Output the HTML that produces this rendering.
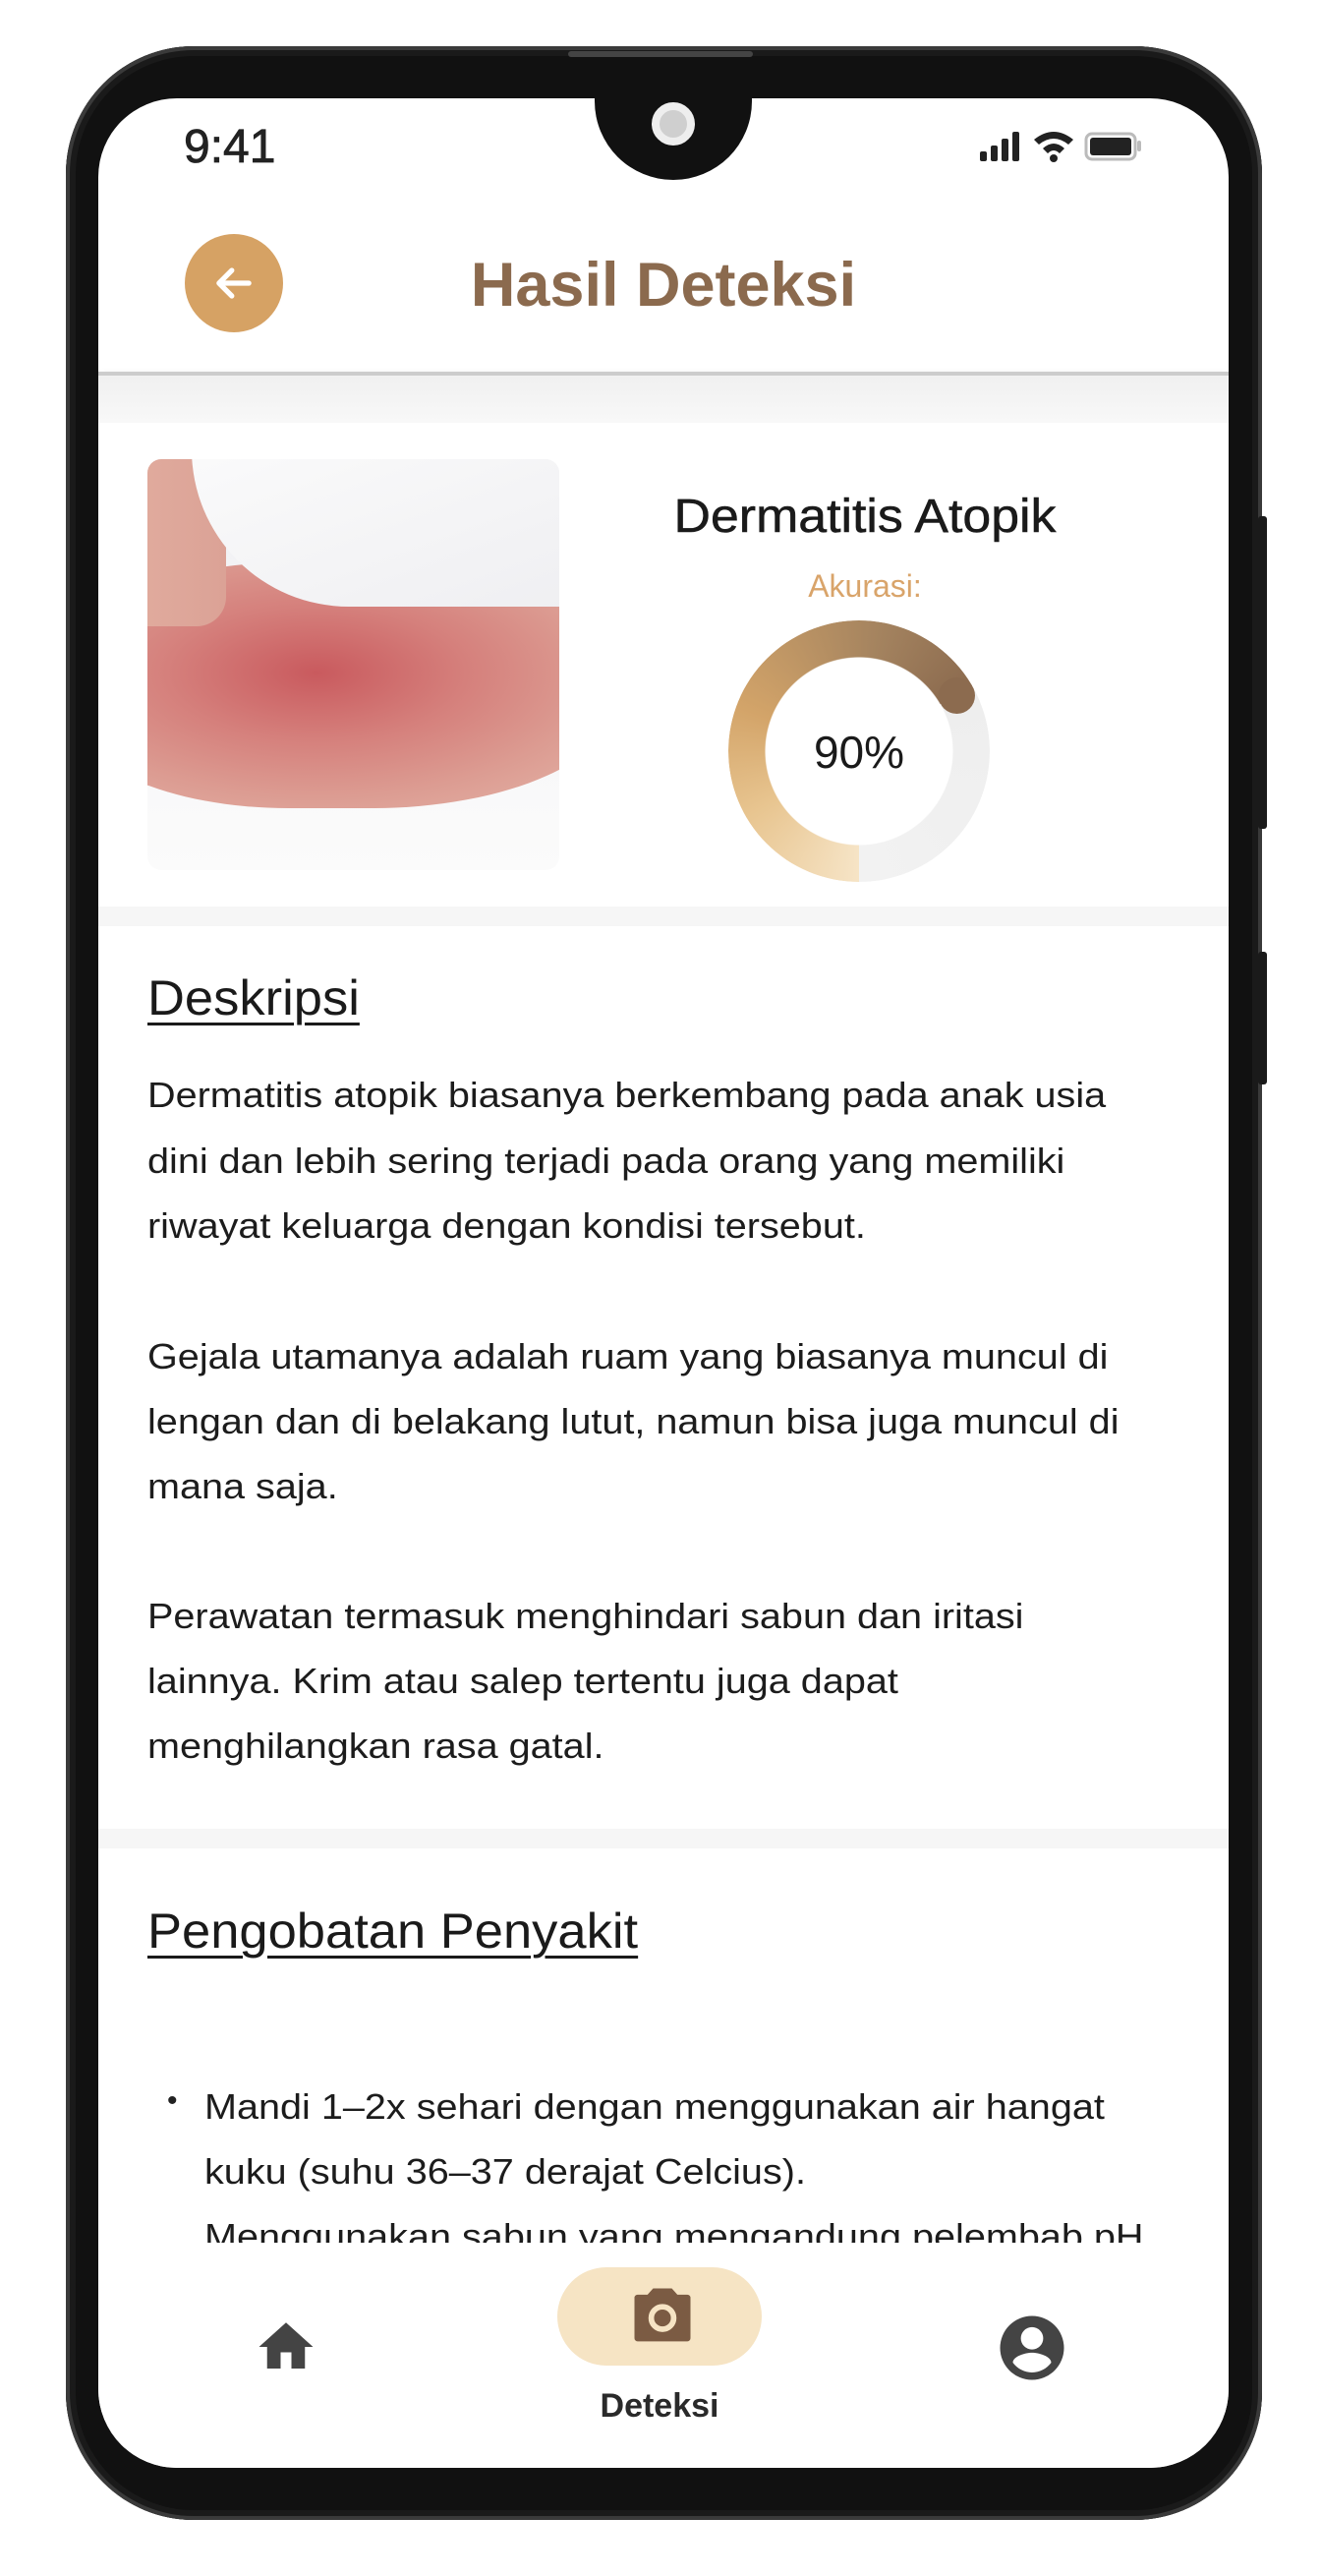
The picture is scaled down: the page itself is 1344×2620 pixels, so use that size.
<!DOCTYPE html>
<html><head><meta charset="utf-8">
<style>
*{margin:0;padding:0;box-sizing:border-box}
body{width:1344px;height:2620px;background:#fff;position:relative;overflow:hidden;font-family:"Liberation Sans",sans-serif}
.frame{position:absolute;left:67px;top:47px;width:1217px;height:2516px;border-radius:130px;background:#111;box-shadow:inset 0 0 0 4px #3a3a3a,inset 0 0 0 10px #1a1a1a}
.btn{position:absolute;background:#1a1a1a;width:9px;border-radius:3px}
.screen{position:absolute;left:100px;top:100px;width:1150px;height:2410px;border-radius:80px;background:#fff;overflow:hidden}
.notch{position:absolute;left:505px;top:-2px;width:160px;height:85px;background:#111;border-radius:0 0 80px 80px}
.speaker{position:absolute;left:578px;top:52px;width:188px;height:6px;background:#444;border-radius:3px}
.abs{position:absolute;white-space:nowrap}
.p{position:absolute;left:50px;font-size:36px;color:#1c1c1c;white-space:nowrap;transform-origin:left;transform:scaleX(1.1)}
.h{position:absolute;left:50px;font-size:50px;color:#1a1a1a;text-decoration:underline;text-decoration-thickness:3px;text-underline-offset:8px;transform-origin:left;transform:scaleX(1.05);white-space:nowrap}
</style></head><body>
<div class="frame"></div>
<div class="btn" style="left:1280px;top:525px;height:318px"></div>
<div class="btn" style="left:1280px;top:968px;height:135px"></div>
<div class="speaker"></div>
<div class="screen">
  <div class="notch"></div>
  <div class="abs" style="left:563px;top:4px;width:44px;height:44px;border-radius:50%;background:#cfcfcf;border:8px solid #eee"></div>
  <div class="abs" style="left:87px;top:22px;font-size:48px;color:#222;-webkit-text-stroke:0.8px #222">9:41</div>
  <svg class="abs" style="left:895px;top:28px" width="170" height="40" viewBox="0 0 170 40">
    <rect x="2" y="26" width="7" height="10" rx="2" fill="#222"/>
    <rect x="13" y="20" width="7" height="16" rx="2" fill="#222"/>
    <rect x="24" y="13" width="7" height="23" rx="2" fill="#222"/>
    <rect x="35" y="6" width="7" height="30" rx="2" fill="#222"/>
    <path d="M57 14 Q77 -2 97 14 L92 19 Q77 7 62 19Z" fill="#222"/>
    <path d="M66 23 Q77 13 88 23 L83 28 Q77 22 71 28Z" fill="#222"/>
    <circle cx="77" cy="33" r="4" fill="#222"/>
    <rect x="110" y="8" width="50" height="26" rx="6" fill="none" stroke="#bbb" stroke-width="3"/>
    <rect x="114" y="12" width="42" height="18" rx="3" fill="#222"/>
    <rect x="162" y="15" width="4" height="11" rx="2" fill="#bbb"/>
  </svg>
  <div class="abs" style="left:88px;top:138px;width:100px;height:100px;border-radius:50%;background:#d6a264"></div>
  <svg class="abs" style="left:112px;top:162px" width="52" height="52" viewBox="0 0 24 24"><path d="M19 12H5M11 6l-6 6 6 6" fill="none" stroke="#fff" stroke-width="2.4" stroke-linecap="round" stroke-linejoin="round"/></svg>
  <div class="abs" style="left:0;width:1150px;text-align:center;top:155px;font-size:63px;font-weight:bold;color:#8b6a4e;line-height:70px">Hasil Deteksi</div>
  <div class="abs" style="left:0;top:278px;width:1150px;height:4px;background:#ccc;box-shadow:0 4px 8px rgba(0,0,0,.15)"></div>
  <div class="abs" style="left:0;top:282px;width:1150px;height:48px;background:linear-gradient(#f0f0f0,#f8f8f8)"></div>
  <div class="abs" style="left:50px;top:367px;width:419px;height:418px;border-radius:14px;overflow:hidden;background:linear-gradient(180deg,#f0f0f3,#fbfbfb)">
    <div style="position:absolute;left:-80px;top:105px;width:560px;height:250px;border-radius:40% 10% 45% 40%;background:radial-gradient(ellipse at 45% 45%,#c95a5e 0%,#d5807c 35%,#dc9c92 65%,#e6b8ab 100%)"></div>
    <div style="position:absolute;left:-30px;top:-30px;width:110px;height:200px;background:linear-gradient(90deg,#e2ad9f,#dba296);border-radius:30px"></div>
    <div style="position:absolute;left:45px;top:-80px;width:460px;height:230px;border-radius:0 0 0 160px;background:linear-gradient(160deg,#fdfdfd,#eeeef1)"></div>
  </div>
  <div class="abs" style="left:545px;width:470px;text-align:center;top:398px;font-size:48px;color:#1a1a1a;transform:scaleX(1.08);-webkit-text-stroke:0.5px #1a1a1a">Dermatitis Atopik</div>
  <div class="abs" style="left:545px;width:470px;text-align:center;top:478px;font-size:32px;color:#d9a46a">Akurasi:</div>
  <div class="abs" style="left:641px;top:531px;width:266px;height:266px;border-radius:50%;background:conic-gradient(from 180deg,#f6e4c6 0deg,#e8c590 60deg,#d3a469 110deg,#a4835f 190deg,#8c6b4f 240deg,#eee 240deg,#f2f2f2 360deg);-webkit-mask:radial-gradient(circle,transparent 95px,#000 96px);mask:radial-gradient(circle,transparent 95px,#000 96px)"></div>
  <div class="abs" style="left:855px;top:589px;width:37px;height:37px;border-radius:50%;background:#8c6b4f"></div>
  <div class="abs" style="left:641px;width:266px;text-align:center;top:638px;font-size:46px;color:#1a1a1a">90%</div>
  <div class="abs" style="left:0;top:822px;width:1150px;height:20px;background:#f6f6f6"></div>
  <div class="h" style="top:886px">Deskripsi</div>
  <div class="p" style="top:993px">Dermatitis atopik biasanya berkembang pada anak usia</div>
  <div class="p" style="top:1060px">dini dan lebih sering terjadi pada orang yang memiliki</div>
  <div class="p" style="top:1126px">riwayat keluarga dengan kondisi tersebut.</div>
  <div class="p" style="top:1259px">Gejala utamanya adalah ruam yang biasanya muncul di</div>
  <div class="p" style="top:1325px">lengan dan di belakang lutut, namun bisa juga muncul di</div>
  <div class="p" style="top:1391px">mana saja.</div>
  <div class="p" style="top:1523px">Perawatan termasuk menghindari sabun dan iritasi</div>
  <div class="p" style="top:1589px">lainnya. Krim atau salep tertentu juga dapat</div>
  <div class="p" style="top:1655px">menghilangkan rasa gatal.</div>
  <div class="abs" style="left:0;top:1760px;width:1150px;height:20px;background:#f6f6f6"></div>
  <div class="h" style="top:1835px">Pengobatan Penyakit</div>
  <div class="abs" style="left:70px;top:2020px;font-size:30px;color:#222">•</div>
  <div class="p" style="left:108px;top:2022px">Mandi 1–2x sehari dengan menggunakan air hangat</div>
  <div class="p" style="left:108px;top:2088px">kuku (suhu 36–37 derajat Celcius).</div>
  <div class="p" style="left:108px;top:2154px">Menggunakan sabun yang mengandung pelembab pH</div>
  <div class="abs" style="left:0;top:2181px;width:1150px;height:240px;background:#fff"></div>
  <div class="abs" style="left:467px;top:2206px;width:208px;height:100px;border-radius:50px;background:#f6e4c4"></div>
  <svg class="abs" style="left:536px;top:2218px" width="76" height="76" viewBox="0 0 24 24"><path d="M9 3L7.2 5H4a1 1 0 0 0-1 1v13a1 1 0 0 0 1 1h16a1 1 0 0 0 1-1V6a1 1 0 0 0-1-1h-3.2L15 3z" fill="#7b5b43"/><circle cx="12" cy="12.5" r="3.6" fill="none" stroke="#f6e4c4" stroke-width="1.8"/></svg>
  <div class="abs" style="left:467px;width:208px;text-align:center;top:2328px;font-size:34px;font-weight:bold;color:#2a2a2a">Deteksi</div>
  <svg class="abs" style="left:158px;top:2254px" width="66" height="66" viewBox="0 0 24 24"><path d="M10 20v-6h4v6h5v-8h3L12 3 2 12h3v8z" fill="#444"/></svg>
  <svg class="abs" style="left:911px;top:2249px" width="78" height="78" viewBox="0 0 24 24"><path d="M12 2a10 10 0 1 0 0 20 10 10 0 0 0 0-20zm0 3.5a3.5 3.5 0 1 1 0 7 3.5 3.5 0 0 1 0-7zm0 14.2a7.6 7.6 0 0 1-6-3.1c.03-2 4-3.1 6-3.1s5.97 1.1 6 3.1a7.6 7.6 0 0 1-6 3.1z" fill="#444"/></svg>
</div>
</body></html>
